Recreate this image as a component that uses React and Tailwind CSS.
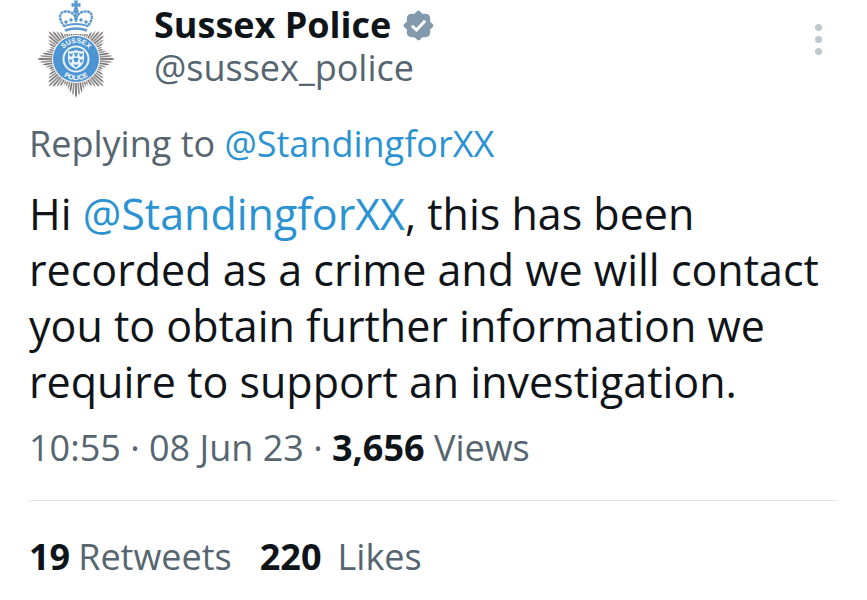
import React from 'react';

const RAY_COUNT = 72;

// Rays get longer towards the eight main points of the star
const rays = Array.from({ length: RAY_COUNT }, (_, i) => {
  const angle = (i / RAY_COUNT) * Math.PI * 2;
  const step = i % 9;
  const distance = Math.min(step, 9 - step);
  const length = 39 - distance * 2.4;
  const half = 0.036;
  const point = (r, a) => `${(39 + r * Math.cos(a)).toFixed(2)},${(59 + r * Math.sin(a)).toFixed(2)}`;
  return [point(20, angle - half), point(length - 3, angle - half * 0.75), point(length, angle), point(length - 3, angle + half * 0.75), point(20, angle + half)].join(' ');
});

const crownDots = [[29, 22], [34, 20], [39, 19], [44, 20], [49, 22]];

function Crest() {
  return (
    <svg viewBox="0 0 78 98" className="h-[98px] w-[78px] shrink-0" role="img" aria-label="Sussex Police crest">
      {rays.map((points, i) => (
        <polygon key={i} points={points} fill={i % 2 ? '#97928f' : '#77777a'} />
      ))}
      <path d="M27 34 L23 15 L55 15 L51 34 Z" fill="#fff" />
      <g fill="none" stroke="#5b99d0" strokeWidth="2.4">
        <path d="M28 27 C21 19 22 12 28 11.500 C34 11 38 14 39 20 C40 14 44 11 50 11.500 C56 12 57 19 50 27" strokeDasharray="3 0.6" />
        <path d="M39 11 V22" strokeDasharray="2.4 0.8" />
        <path d="M27 26 Q39 22 51 26" strokeWidth="1.8" />
        <path d="M28 30.500 Q39 26.500 50 30.500" strokeWidth="2.6" />
      </g>
      <g fill="#5b99d0">
        <path d="M37 0.500 H41 L40.300 3.500 L43.500 3 V7 L40.300 6.500 L41 9 H37 L37.700 6.500 L34.500 7 V3 L37.700 3.500 Z" />
        <circle cx="39" cy="11" r="2.6" />
        {crownDots.map(([cx, cy]) => (
          <circle key={cx} cx={cx} cy={cy} r="1.8" />
        ))}
      </g>
      <circle cx="39" cy="59" r="24" fill="#fff" />
      <circle cx="39" cy="59" r="23" fill="#4c94d2" />
      <circle cx="39" cy="59" r="12.500" fill="#4c94d2" stroke="#e6f1fa" strokeWidth="2" />
      <path d="M31 51 Q35 52 39 50 Q43 52 47 51 V59 Q47 66 39 69 Q31 66 31 59 Z" fill="#e9f3fb" />
      <g fill="#4c94d2">
        <path d="M32 53 l2 1 2 -1 -1 3.500 h-2 Z M42 53 l2 1 2 -1 -1 3.500 h-2 Z" />
        <path d="M37 52.500 h1 l1 1 1 -1 h1 l-1 4 h-2 Z M36.500 58 h5 l-1 4 h-3 Z" />
        <path d="M32 59 l2 1 1.500 -1 -1 3.500 h-1.500 Z M42.500 59 l1.500 1 2 -1 -1 3.500 h-1.500 Z M36.500 64 l2.500 1 2.500 -1 -1.500 3 h-2 Z" />
      </g>
      <path id="crest-top" d="M23 59 A16 16 0 0 1 55 59" fill="none" />
      <path id="crest-bottom" d="M18 59 A21 21 0 0 0 60 59" fill="none" />
      <g fill="#fff" fontFamily="Liberation Sans, sans-serif" fontSize="7" fontWeight="700" textAnchor="middle">
        <text><textPath href="#crest-top" startOffset="50%">SUSSEX</textPath></text>
        <text><textPath href="#crest-bottom" startOffset="50%">POLICE</textPath></text>
      </g>
    </svg>
  );
}

function VerifiedBadge() {
  return (
    <svg viewBox="1 1 22 22" className="size-[31px] shrink-0" role="img" aria-label="Verified account">
      <path
        fill="#829aab"
        d="M12 2 Q12.600 2 14.600 4.400 Q18.300 4 19 5 Q20 5.700 19.600 9.400 Q22 11.400 22 12 Q22 12.600 19.600 14.600 Q20 18.300 19 19 Q18.300 20 14.600 19.600 Q12.600 22 12 22 Q11.400 22 9.400 19.600 Q5.700 20 5 19 Q4 18.300 4.400 14.600 Q2 12.600 2 12 Q2 11.400 4.400 9.400 Q4 5.700 5 5 Q5.700 4 9.400 4.400 Q11.400 2 12 2 Z"
        stroke="#829aab"
        strokeWidth="1.2"
        strokeLinejoin="round"
      />
      <path d="M7.300 12.200 L10.600 15.200 L16.700 8.600" fill="none" stroke="#fff" strokeWidth="2.1" />
    </svg>
  );
}

function App() {
  return (
    <article className="bg-white px-[29px] font-['Open_Sans',sans-serif] text-[#566570]">
      <header className="flex items-start">
        <div className="pl-2">
          <Crest />
        </div>
        <div className="min-w-0 flex-1 pt-1 pl-[39px]">
          <div className="flex items-center gap-3">
            <h1 className="text-[36px] leading-[42px] font-bold text-[#0f1419]">Sussex Police</h1>
            <VerifiedBadge />
          </div>
          <p className="text-[36px] leading-[44px]">@sussex_police</p>
        </div>
        <button type="button" aria-label="More options" className="mt-6 mr-4 flex flex-col gap-[5px]">
          <span className="size-[7px] rounded-full bg-[#bdc8cf]" />
          <span className="size-[7px] rounded-full bg-[#bdc8cf]" />
          <span className="size-[7px] rounded-full bg-[#bdc8cf]" />
        </button>
      </header>

      <p className="mt-6 text-[36px] leading-[44px]">
        Replying to <a href="#StandingforXX" className="text-[#2b93d1]">@StandingforXX</a>
      </p>

      <p className="mt-5 text-[43px] leading-[56px] text-[#0f1419]">
        Hi <a href="#StandingforXX" className="text-[#2b93d1]">@StandingforXX</a>, this has been recorded as a crime and we will contact you to obtain further information we require to support an investigation.
      </p>

      <p className="mt-4 text-[36px] leading-[44px]">
        10:55 · 08 Jun 23 · <strong className="font-bold text-[#0f1419]">3,656</strong> Views
      </p>

      <footer className="mt-[30px] flex gap-7 border-t border-[#e1e5e8] pt-[34px] text-[36px] leading-[44px]">
        <span className="flex gap-2">
          <strong className="font-bold text-[#0f1419]">19</strong>
          Retweets
        </span>
        <span className="flex gap-4">
          <strong className="font-bold text-[#0f1419]">220</strong>
          Likes
        </span>
      </footer>
    </article>
  );
}

export default App;
